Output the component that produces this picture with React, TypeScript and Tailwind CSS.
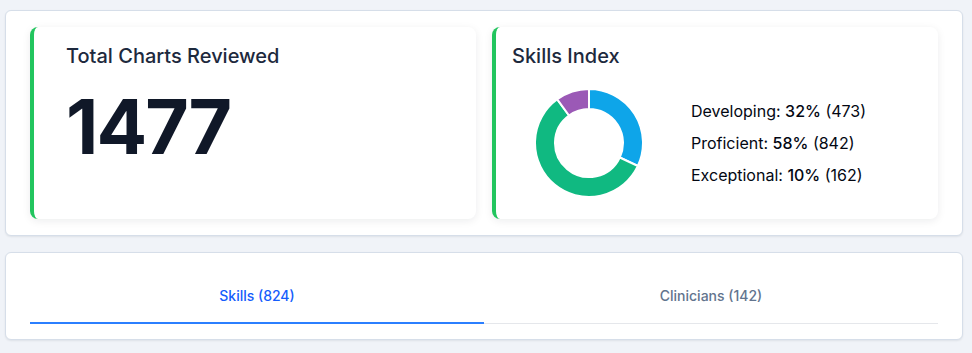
import React from 'react';

interface Segment {
  label: string;
  pct: number;
  count: number;
  color: string;
}

const segments: Segment[] = [
  { label: 'Developing', pct: 32, count: 473, color: '#0ea5e9' },
  { label: 'Proficient', pct: 58, count: 842, color: '#10b981' },
  { label: 'Exceptional', pct: 10, count: 162, color: '#9b59b6' },
];

const arcPath = (start: number, end: number, R: number, r: number, c: number) => {
  const pt = (rad: number, a: number) => {
    const t = ((a - 90) * Math.PI) / 180;
    return `${c + rad * Math.cos(t)} ${c + rad * Math.sin(t)}`;
  };
  const large = end - start > 180 ? 1 : 0;
  return `M ${pt(R, start)} A ${R} ${R} 0 ${large} 1 ${pt(R, end)} L ${pt(r, end)} A ${r} ${r} 0 ${large} 0 ${pt(r, start)} Z`;
};

const Donut: React.FC = () => {
  let acc = 0;
  return (
    <svg width="108" height="108" viewBox="0 0 108 108">
      {segments.map((s) => {
        const start = (acc / 100) * 360;
        acc += s.pct;
        const end = (acc / 100) * 360;
        return (
          <path
            key={s.label}
            d={arcPath(start, end, 54, 34, 54)}
            fill={s.color}
            stroke="#ffffff"
            strokeWidth={2}
            strokeLinejoin="round"
          />
        );
      })}
    </svg>
  );
};

const StatCard: React.FC<{ children: React.ReactNode; className?: string }> = ({ children, className }) => (
  <article className={`bg-white rounded-lg shadow-[0_2px_8px_rgba(15,23,42,0.08)] border-l-4 border-[#22c55e] pt-[15px] pb-[23px] ${className ?? ''}`}>
    {children}
  </article>
);

export default function App() {
  return (
    <div className="min-h-screen bg-[#f0f3f8] pt-[10px] pl-[5px] font-['Inter',sans-serif]">
      <div className="w-[958px] flex flex-col gap-4">
        <section className="bg-white border border-[#d6dee9] rounded-md shadow-[0_1px_2px_rgba(15,23,42,0.08)] px-6 py-4">
          <div className="grid grid-cols-2 gap-4">
            <StatCard className="pl-8 pr-4">
              <h3 className="text-xl leading-7 font-medium text-slate-800">Total Charts Reviewed</h3>
              <div className="mt-[19px] text-[75px] leading-none font-bold text-gray-900 tracking-tight">1477</div>
            </StatCard>
            <StatCard className="px-4">
              <h3 className="text-xl leading-7 font-medium text-slate-800">Skills Index</h3>
              <div className="mt-5 flex items-center">
                <div className="ml-[23px] -my-px">
                  <Donut />
                </div>
                <ul className="ml-12 space-y-2 text-base leading-6 text-gray-950">
                  {segments.map((s) => (
                    <li key={s.label}>
                      {s.label}: <span className="font-medium">{s.pct}%</span> ({s.count})
                    </li>
                  ))}
                </ul>
              </div>
            </StatCard>
          </div>
        </section>

        <section className="bg-white border border-[#d6dee9] rounded-md shadow-[0_1px_2px_rgba(15,23,42,0.08)] px-6 pt-[17px] pb-[15px]">
          <nav className="flex border-b border-gray-200">
            <button className="flex-1 py-4 -mb-px border-b-2 border-blue-500 text-sm font-medium text-blue-600">
              Skills (824)
            </button>
            <button className="flex-1 py-4 -mb-px border-b-2 border-transparent text-sm font-medium text-slate-500">
              Clinicians (142)
            </button>
          </nav>
        </section>
      </div>
    </div>
  );
}
